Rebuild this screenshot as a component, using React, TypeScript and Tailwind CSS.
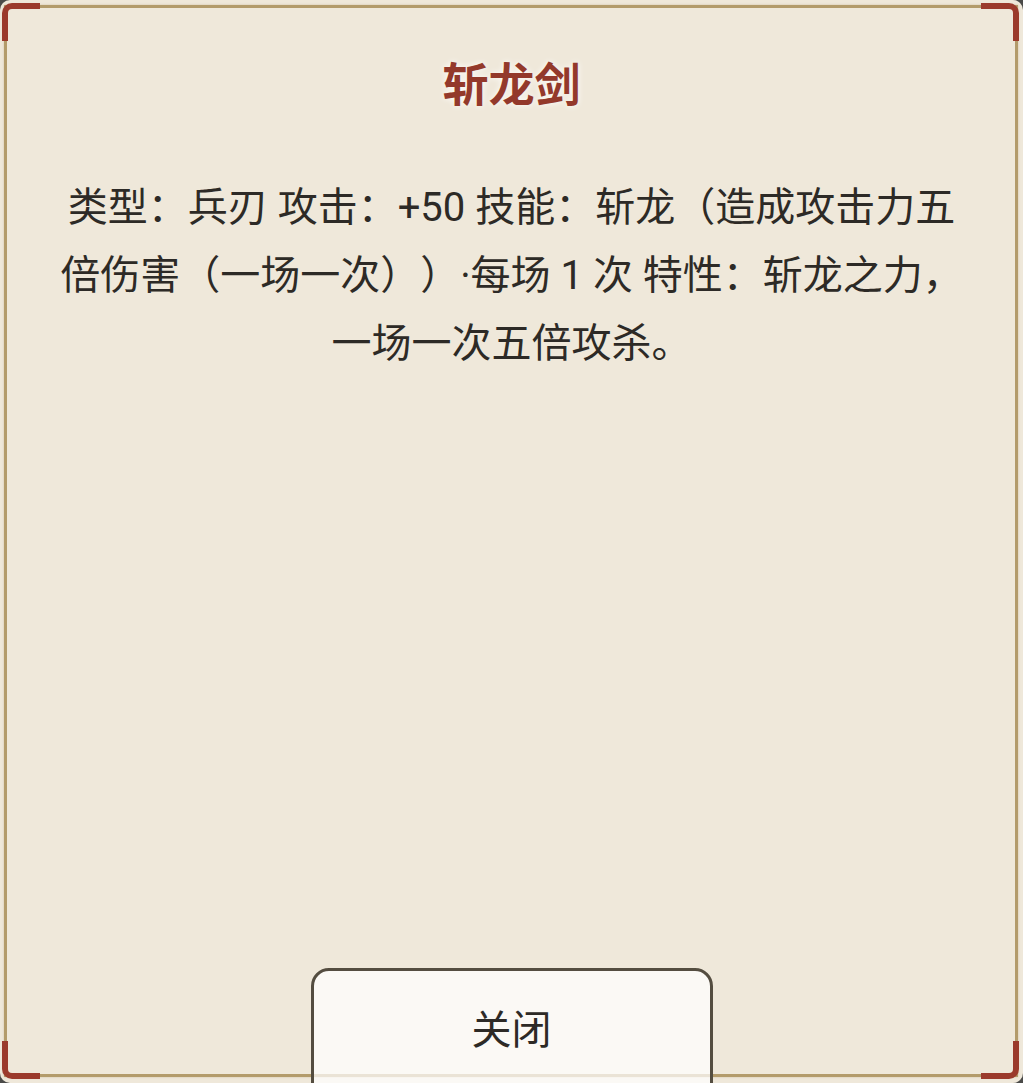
import React from "react";

const font = {
  fontFamily: '"Roboto", "Noto Sans CJK SC", "Noto Sans", sans-serif',
};

function Corner({ pos }: { pos: string }) {
  return <div className={`pointer-events-none absolute h-[38px] w-[38px] border-[#9b3a2c] ${pos}`} />;
}

export default function App() {
  return (
    <div className="h-[1083px] w-full bg-[#4a4a48]" style={font}>
      <div className="relative flex h-[1083px] w-full flex-col items-center overflow-hidden rounded-[10px] bg-[#efe8da] [text-spacing-trim:space-all]">
        {/* gold frame line */}
        <div className="pointer-events-none absolute bottom-[6px] left-[4px] right-[5px] top-[5px] border-[3px] border-[#b39b6b] shadow-[0_0_2px_rgba(180,155,107,0.5)]" />

        {/* red corner brackets */}
        <Corner pos="left-[2px] top-[3px] rounded-tl-[10px] border-l-[6px] border-t-[6px]" />
        <Corner pos="right-[4px] top-[3px] rounded-tr-[10px] border-r-[6px] border-t-[6px]" />
        <Corner pos="bottom-[4px] left-[2px] rounded-bl-[10px] border-b-[6px] border-l-[6px]" />
        <Corner pos="bottom-[4px] right-[4px] rounded-br-[10px] border-b-[6px] border-r-[6px]" />

        <h1 className="relative pt-[51px] text-[46px] font-bold leading-[69px] text-[#93392b] [text-shadow:0_0_6px_rgba(255,255,255,0.95)]">
          斩龙剑
        </h1>

        <p className="relative mt-[54px] w-[922px] text-center text-[40px] leading-[68px] text-[#2d2a26]">
          类型：兵刃 攻击：+50 技能：斩龙（造成攻击力五倍伤害（一场一次））·每场 1 次 特性：斩龙之力，一场一次五倍攻杀。
        </p>

        <div className="flex-1" />

        <button className="relative mb-[-22px] flex h-[137px] w-[402px] shrink-0 items-start justify-center rounded-[18px] border-[3px] border-[#544d40] bg-[rgba(255,255,255,0.72)] pt-[36px] text-[40px] leading-[48px] text-[#2d2a26]">
          关闭
        </button>
      </div>
    </div>
  );
}
